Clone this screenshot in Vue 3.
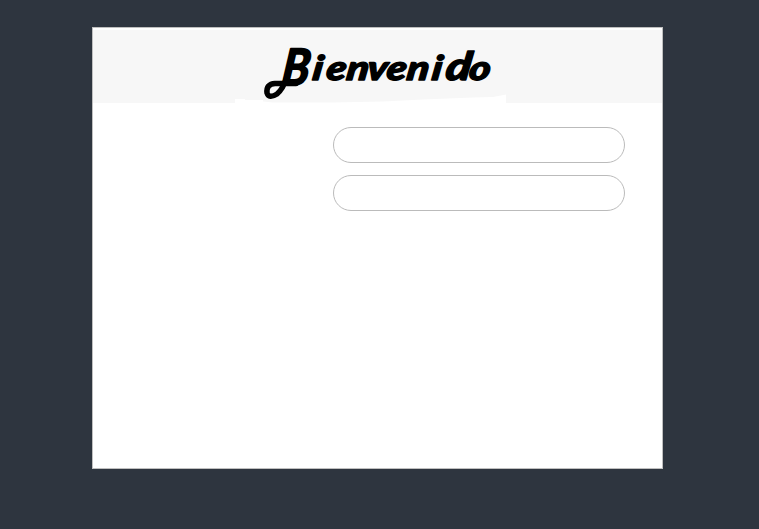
<script setup>
import { ref } from 'vue'

const user = ref('')
const password = ref('')
</script>

<template>
  <main class="page">
    <form class="card" @submit.prevent>
      <header class="header">
        <svg class="banner" viewBox="0 0 569 75" width="569" height="75" role="heading" aria-level="1">
          <path class="edge" d="M142 71h10v1h18v1.500l10 1h60l50-1 40-2 50-2 20-.5 13-2.500v8.500H142z" />
          <path class="flourish" d="M194 49 Q190 61 184 66 Q176 71 174 65 Q173 56 182 55.500 H203" />
          <text class="initial" transform="translate(187.500 57) skewX(-7) scale(.9 1)">B</text>
          <text
            class="title"
            transform="translate(0 52) skewX(-8) scale(1.2 1)"
            x="182 193.500 210.500 227.500 243.800 260.700 281.500"
          >ienveni<tspan class="tall" x="293">d</tspan><tspan x="312.500">o</tspan></text>
        </svg>
      </header>
      <div class="fields">
        <input v-model="user" class="field" type="text" />
        <input v-model="password" class="field" type="password" />
      </div>
    </form>
  </main>
</template>

<style>
body {
  margin: 0;
  background: #2e353f;
}
</style>

<style scoped>
.page {
  box-sizing: border-box;
  width: 100%;
  height: 529px;
  padding: 27px 0 0 92px;
  background: #2e353f;
}

.card {
  box-sizing: border-box;
  width: 571px;
  height: 442px;
  border: 1px solid #bfbfbf;
  background: #fff;
}

.header {
  height: 75px;
  background: linear-gradient(#fff 2px, #f7f7f7 2px);
}

.banner {
  display: block;
}

.edge {
  fill: #fff;
}

.title,
.initial {
  font-family: Lato, "Liberation Sans", sans-serif;
  font-style: italic;
  font-weight: 900;
  fill: #000;
  stroke: #000;
  stroke-linejoin: round;
}

.title {
  font-size: 34px;
  stroke-width: 1.3px;
}

.tall {
  font-size: 39px;
}

.initial {
  font-size: 50px;
  font-weight: 700;
  stroke-width: 2px;
}

.flourish {
  fill: none;
  stroke: #000;
  stroke-width: 5.5px;
  stroke-linecap: round;
  stroke-linejoin: round;
}

.fields {
  display: flex;
  flex-direction: column;
  gap: 12px;
  padding: 24px 37px 0 240px;
}

.field {
  box-sizing: border-box;
  width: 292px;
  height: 36px;
  padding: 0 16px;
  border: 1px solid #bbb;
  border-radius: 18px;
  outline: none;
  background: #fff;
  font: 14px "Liberation Sans", sans-serif;
}
</style>
